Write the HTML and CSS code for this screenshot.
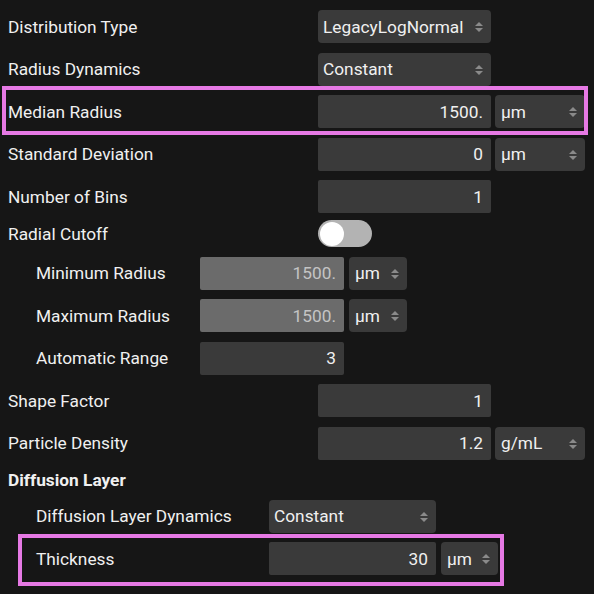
FILE: index.html
```html
<!DOCTYPE html>
<html>
<head>
<meta charset="utf-8">
<link rel="stylesheet" href="styles.css">
</head>
<body>
<div class="form">
  <div class="row">
    <div class="label">Distribution Type</div>
    <div class="select w-main"><span>LegacyLogNormal</span><svg class="arrows" viewBox="0 0 8 12"><polygon points="0,5 4,1 8,5"/><polygon points="0,7 4,11 8,7"/></svg></div>
  </div>
  <div class="row">
    <div class="label">Radius Dynamics</div>
    <div class="select w-main"><span>Constant</span><svg class="arrows" viewBox="0 0 8 12"><polygon points="0,5 4,1 8,5"/><polygon points="0,7 4,11 8,7"/></svg></div>
  </div>
  <div class="row mark mark-median">
    <div class="label">Median Radius</div>
    <div class="input w-main">1500.</div>
    <div class="select unit w-unit"><span>µm</span><svg class="arrows" viewBox="0 0 8 12"><polygon points="0,5 4,1 8,5"/><polygon points="0,7 4,11 8,7"/></svg></div>
  </div>
  <div class="row">
    <div class="label">Standard Deviation</div>
    <div class="input w-main">0</div>
    <div class="select unit w-unit"><span>µm</span><svg class="arrows" viewBox="0 0 8 12"><polygon points="0,5 4,1 8,5"/><polygon points="0,7 4,11 8,7"/></svg></div>
  </div>
  <div class="row">
    <div class="label">Number of Bins</div>
    <div class="input w-main">1</div>
  </div>
  <div class="row row-toggle">
    <div class="label">Radial Cutoff</div>
    <div class="toggle"><div class="knob"></div></div>
  </div>
  <div class="row sub">
    <div class="label">Minimum Radius</div>
    <div class="input disabled w-sub">1500.</div>
    <div class="select unit w-subunit"><span>µm</span><svg class="arrows" viewBox="0 0 8 12"><polygon points="0,5 4,1 8,5"/><polygon points="0,7 4,11 8,7"/></svg></div>
  </div>
  <div class="row sub">
    <div class="label">Maximum Radius</div>
    <div class="input disabled w-sub">1500.</div>
    <div class="select unit w-subunit"><span>µm</span><svg class="arrows" viewBox="0 0 8 12"><polygon points="0,5 4,1 8,5"/><polygon points="0,7 4,11 8,7"/></svg></div>
  </div>
  <div class="row sub">
    <div class="label">Automatic Range</div>
    <div class="input w-sub">3</div>
  </div>
  <div class="row">
    <div class="label">Shape Factor</div>
    <div class="input w-main">1</div>
  </div>
  <div class="row">
    <div class="label">Particle Density</div>
    <div class="input w-main">1.2</div>
    <div class="select unit w-unit"><span>g/mL</span><svg class="arrows" viewBox="0 0 8 12"><polygon points="0,5 4,1 8,5"/><polygon points="0,7 4,11 8,7"/></svg></div>
  </div>
  <div class="row header">
    <div class="label">Diffusion Layer</div>
  </div>
  <div class="row sub2">
    <div class="label">Diffusion Layer Dynamics</div>
    <div class="select w-sub2"><span>Constant</span><svg class="arrows" viewBox="0 0 8 12"><polygon points="0,5 4,1 8,5"/><polygon points="0,7 4,11 8,7"/></svg></div>
  </div>
  <div class="row sub2 mark mark-thick">
    <div class="label">Thickness</div>
    <div class="input w-sub2">30</div>
    <div class="select unit w-sub2unit"><span>µm</span><svg class="arrows" viewBox="0 0 8 12"><polygon points="0,5 4,1 8,5"/><polygon points="0,7 4,11 8,7"/></svg></div>
  </div>
</div>
</body>
</html>
```
FILE: styles.css
```css
*, *::before, *::after { box-sizing: border-box; }
html, body { margin: 0; padding: 0; background: #161616; }
body {
  width: 594px;
  height: 594px;
  overflow: hidden;
  font-family: Roboto, "Liberation Sans", sans-serif;
  font-size: 17.3px;
  color: #f0f0f0;
}
.form {
  display: flex;
  flex-direction: column;
  gap: 9.5px;
  padding: 10px 0 0 8px;
}
.row {
  display: flex;
  align-items: center;
  height: 33px;
  position: relative;
}
.label {
  width: 310px;
  flex: none;
  white-space: nowrap;
}
.row.sub .label { width: 192px; padding-left: 28px; }
.row.sub2 .label { width: 261px; padding-left: 28px; }
.row-toggle { height: 27px; margin-top: -2.5px; }
.row.header { height: 21px; }
.row.header .label { font-weight: 700; }

.input, .select {
  height: 33px;
  flex: none;
  background: #3a3a3a;
  display: flex;
  align-items: center;
  border-radius: 2px;
  white-space: nowrap;
}
.input {
  justify-content: flex-end;
  padding-right: 8px;
}
.input.disabled {
  background: #6b6b6b;
  color: #c4c4c4;
}
.select {
  position: relative;
  padding-left: 5px;
  border-radius: 4px;
}
.select.unit { padding-left: 6px; }
.arrows {
  position: absolute;
  right: 8px;
  top: 11px;
  width: 8px;
  height: 12px;
  fill: #8a8a8a;
}
.w-main { width: 173px; }
.w-unit { width: 90px; margin-left: 4px; }
.w-sub { width: 144px; }
.w-subunit { width: 58px; margin-left: 5px; }
.w-sub2 { width: 167px; }
.w-sub2unit { width: 57px; margin-left: 5px; }

.toggle {
  width: 54px;
  height: 27px;
  border-radius: 14px;
  background: #b3b3b3;
  position: relative;
  flex: none;
}
.knob {
  position: absolute;
  left: 2px;
  top: 1.5px;
  width: 24px;
  height: 24px;
  border-radius: 50%;
  background: #ffffff;
}

.mark::after {
  content: "";
  position: absolute;
  border: 4px solid #e679e4;
  pointer-events: none;
}
.mark-median::after {
  left: -6px;
  top: -9px;
  width: 586px;
  height: 49px;
}
.mark-thick::after {
  left: 10px;
  top: -8px;
  width: 486px;
  height: 52px;
}
```
